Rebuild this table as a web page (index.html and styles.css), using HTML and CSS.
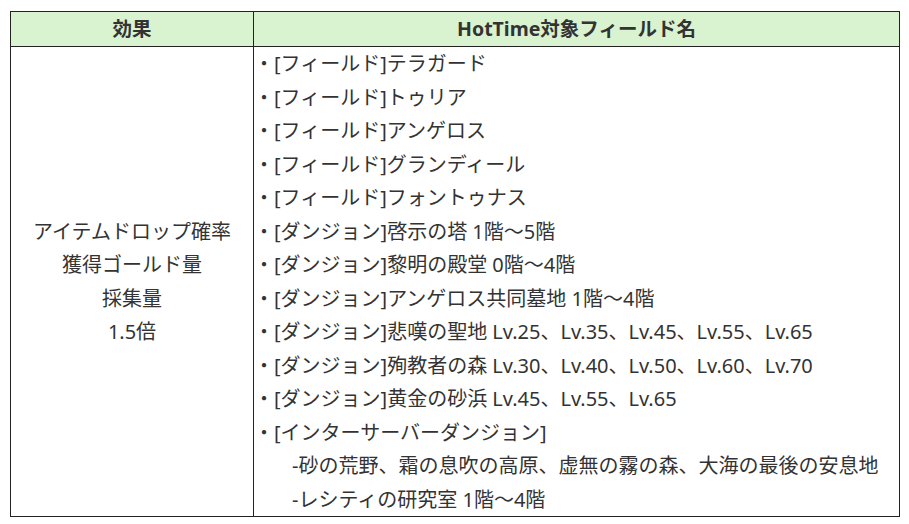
FILE: index.html
```html
<!DOCTYPE html>
<html lang="ja">
<head>
<meta charset="utf-8">
<title>HotTime</title>
<link rel="stylesheet" href="styles.css">
</head>
<body>
<table class="hot">
  <thead>
    <tr>
      <th class="col-effect">効果</th>
      <th class="col-field">HotTime対象フィールド名</th>
    </tr>
  </thead>
  <tbody>
    <tr>
      <td class="effect">アイテムドロップ確率<br>獲得ゴールド量<br>採集量<br>1.5倍</td>
      <td class="fields">
        <div class="item">・[フィールド]テラガード</div>
        <div class="item">・[フィールド]トゥリア</div>
        <div class="item">・[フィールド]アンゲロス</div>
        <div class="item">・[フィールド]グランディール</div>
        <div class="item">・[フィールド]フォントゥナス</div>
        <div class="item">・[ダンジョン]啓示の塔 1階～5階</div>
        <div class="item">・[ダンジョン]黎明の殿堂 0階～4階</div>
        <div class="item">・[ダンジョン]アンゲロス共同墓地 1階～4階</div>
        <div class="item">・[ダンジョン]悲嘆の聖地 Lv.25、Lv.35、Lv.45、Lv.55、Lv.65</div>
        <div class="item">・[ダンジョン]殉教者の森 Lv.30、Lv.40、Lv.50、Lv.60、Lv.70</div>
        <div class="item">・[ダンジョン]黄金の砂浜 Lv.45、Lv.55、Lv.65</div>
        <div class="item">・[インターサーバーダンジョン]</div>
        <div class="item sub">-砂の荒野、霜の息吹の高原、虚無の霧の森、大海の最後の安息地</div>
        <div class="item sub">-レシティの研究室 1階～4階</div>
      </td>
    </tr>
  </tbody>
</table>
</body>
</html>
```

FILE: styles.css
```css
html, body {
  margin: 0;
  padding: 0;
  background: #ffffff;
}

body {
  padding: 11px 0 0 10px;
  font-family: "Noto Sans", "Noto Sans CJK JP", sans-serif;
  color: #333333;
}

.hot {
  border-collapse: collapse;
  width: 890px;
  font-size: 20px;
}

.hot th,
.hot td {
  border: 1px solid #222222;
  padding: 0;
}

.hot th {
  background: #d9f2d0;
  font-weight: bold;
  font-size: 19.5px;
  height: 34px;
  line-height: 34px;
  text-align: center;
}

.col-effect {
  width: 242px;
}

.effect {
  text-align: center;
  vertical-align: middle;
  line-height: 33.5px;
}

.fields {
  padding-left: 9px;
  line-height: 33.5px;
  text-align: left;
  vertical-align: top;
}

.item {
  white-space: nowrap;
}

.item.sub {
  padding-left: 38px;
}
```
